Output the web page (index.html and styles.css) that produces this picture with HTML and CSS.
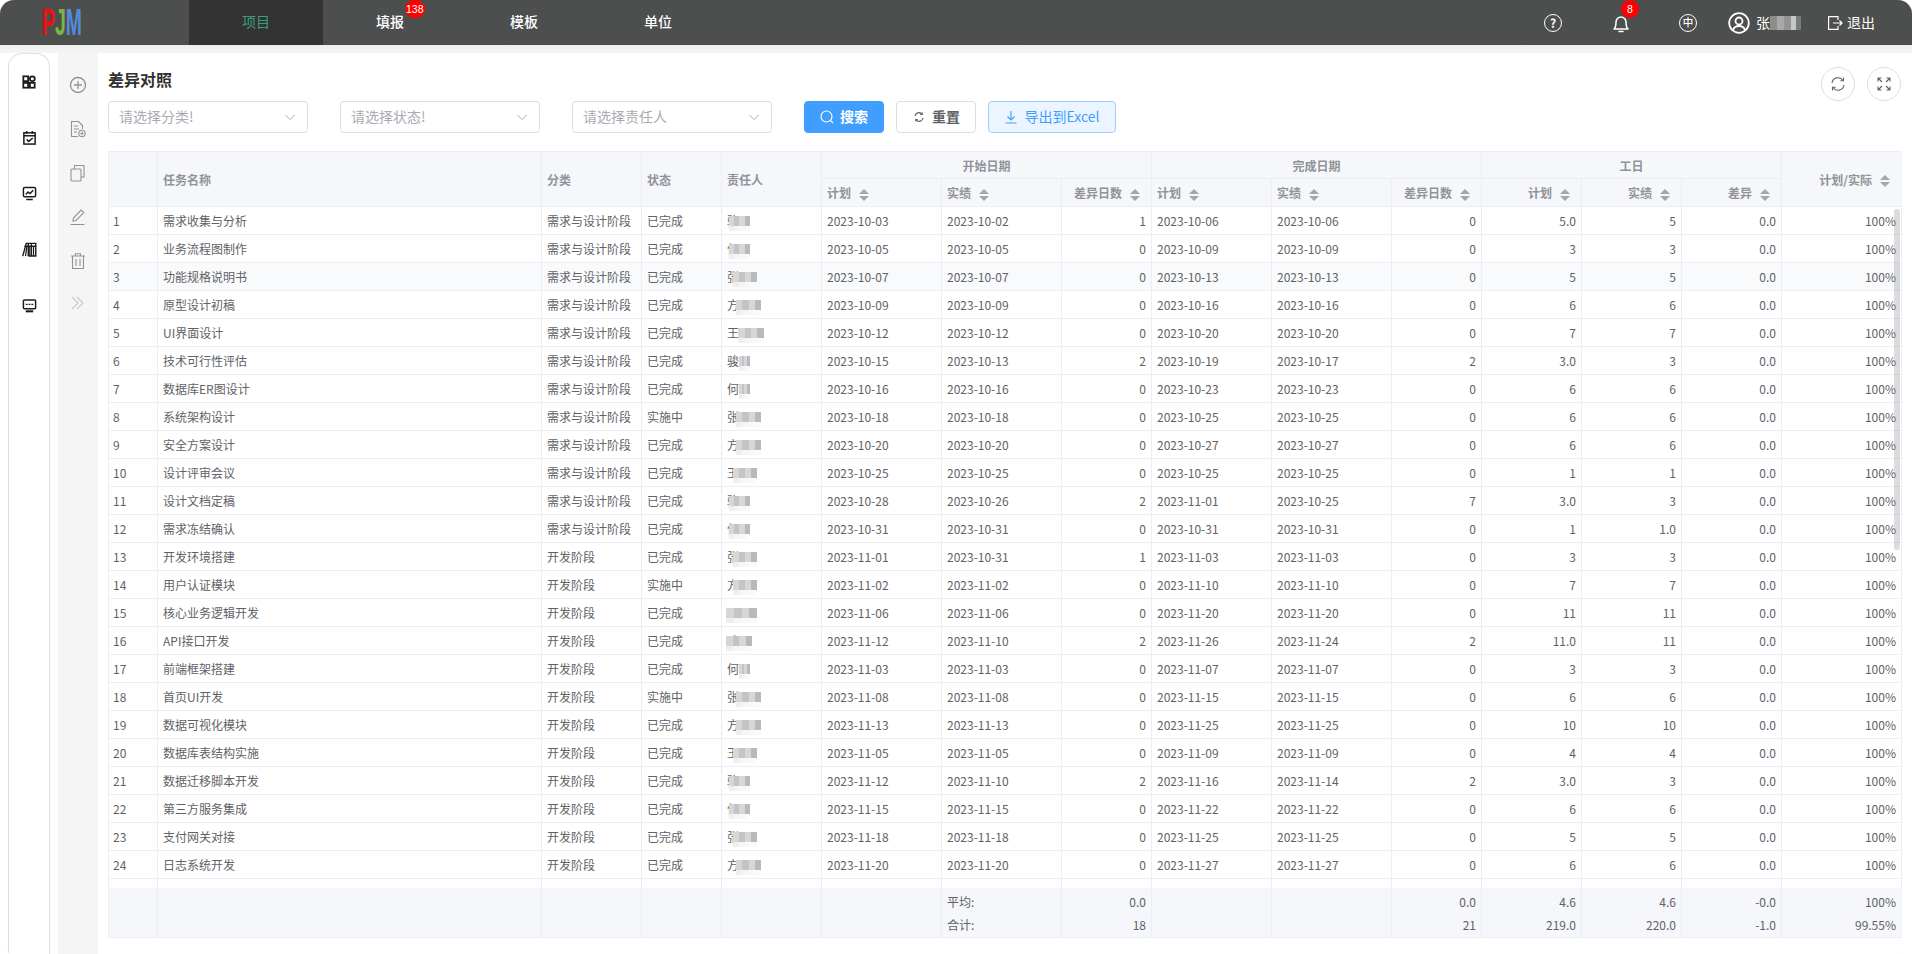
FILE: index.html
```html
<!DOCTYPE html>
<html lang="zh-CN">
<head>
<meta charset="utf-8">
<title>差异对照</title>
<link rel="stylesheet" href="styles.css">
</head>
<body>
<div class="app">
  <header class="hd">
    <div class="logo"><span class="logo-t"><span class="lp">P</span><span class="lj">J</span><span class="lm">M</span></span></div>
    <nav class="nav">
      <a class="tab active">项目</a>
      <a class="tab">填报<span class="badge b-tab">138</span></a>
      <a class="tab">模板</a>
      <a class="tab">单位</a>
    </nav>
    <div class="hd-right">
      <span class="hd-ico"><span class="ring">?</span></span>
      <span class="hd-ico">
        <svg class="bell" viewBox="0 0 18 20" width="18" height="20" fill="none" stroke="#fff" stroke-width="1.5"><path d="M2 16c1.3-1.2 2-2.4 2-7a5 5 0 0 1 10 0c0 4.600.7 5.800 2 7z" stroke-linejoin="round"/><path d="M7 18.500h4" stroke-linecap="round"/></svg>
        <span class="badge b-bell">8</span>
      </span>
      <span class="hd-ico hd-lang"><span class="ring ring-zh">中</span></span>
      <span class="user">
        <svg viewBox="0 0 22 22" width="22" height="22" fill="none" stroke="#fff" stroke-width="1.800"><circle cx="11" cy="11" r="9.800"/><circle cx="11" cy="9" r="3.500"/><path d="M5 18c1-3 3.500-4 6-4s5 1 6 4"/></svg>
        <span class="user-n">张<i class="mz-top"></i></span>
      </span>
      <span class="exit">
        <svg viewBox="0 0 16 16" width="16" height="16" fill="none" stroke="#fff" stroke-width="1.200"><path d="M11 5V1.600H1.600v12.800H11V11"/><path d="M6 8h9M12.500 5.500 15 8l-2.500 2.500"/></svg>
        <span class="lbl">退出</span>
      </span>
    </div>
  </header>

  <div class="body">
    <aside class="rail">
      <svg viewBox="0 0 16 16" width="14" height="14" fill="none" stroke="#1c1c1c" stroke-width="2"><rect x="1.500" y="1.500" width="5.500" height="5.500"/><rect x="1.500" y="9" width="5.500" height="5.500"/><rect x="9" y="9" width="5.500" height="5.500"/><circle cx="11.800" cy="4.300" r="2.800"/></svg>
      <svg viewBox="0 0 16 16" width="15" height="15" fill="none" stroke="#1c1c1c" stroke-width="1.600"><rect x="2" y="3" width="12" height="12"/><path d="M2 6.200h12M5 1v3M11 1v3"/><path d="m5 10 2.200 2.200L11.500 8.500"/></svg>
      <svg viewBox="0 0 16 16" width="15" height="15" fill="none" stroke="#1c1c1c" stroke-width="1.600"><rect x="1.500" y="1.500" width="13" height="10" rx="1.500"/><path d="m4 9 2.500-2.500 2 1.500L12 4.500M4.500 14.500h7"/></svg>
      <svg viewBox="0 0 16 16" width="15" height="15" fill="none" stroke="#1c1c1c" stroke-width="1.500"><path d="M.8 15 4.500 1.500h2.200V15M6.700 1.500H10V15H6.700M10 1.500h4.700V15H10M2.500 4.500h12"/><path d="M3.800 15 5.200 4.500M8.300 4.500V15M12.300 4.500V15" stroke-width="1.300"/></svg>
      <svg viewBox="0 0 16 16" width="15" height="15" fill="none" stroke="#1c1c1c" stroke-width="1.600"><rect x="1.500" y="2" width="13" height="9.500" rx="1"/><path d="M4 14.200h8" stroke-width="2.200"/><path d="M4 6.800h2M7 6.800h2M10 6.800h2" stroke-width="1.400"/></svg>
    </aside>
    <aside class="tools">
      <svg viewBox="0 0 18 18" width="18" height="18" fill="none" stroke="#909399" stroke-width="1.300"><circle cx="9" cy="9" r="7.500"/><path d="M9 5v8M5 9h8"/></svg>
      <svg viewBox="0 0 18 18" width="18" height="18" fill="none" stroke="#909399" stroke-width="1.100"><path d="M9 16.500H2.500V1.500h7l4 4V9"/><path d="M5 6h4M5 9h5M5 12h3"/><circle cx="13" cy="13.500" r="3.200"/><path d="M13 11.800v3.400M11.300 13.500h3.400"/></svg>
      <svg viewBox="0 0 18 18" width="18" height="18" fill="none" stroke="#909399" stroke-width="1.100"><rect x="2" y="5" width="10" height="12" rx="1"/><path d="M5.500 5V1.500h9.500v11.500L12 13"/></svg>
      <svg viewBox="0 0 18 18" width="18" height="18" fill="none" stroke="#909399" stroke-width="1.100"><path d="m4 13 .5-3L12 2l2.800 2.600L7 12.500z"/><path d="M1.500 16.500h14"/></svg>
      <svg viewBox="0 0 18 18" width="18" height="18" fill="none" stroke="#909399" stroke-width="1.100"><path d="M2 4h14M6.500 4V1.800h5V4M3.500 4v12.500h11V4M7 7v7M11 7v7"/></svg>
      <svg class="t-last" viewBox="0 0 18 18" width="18" height="18" fill="none" stroke="#c8c9cc" stroke-width="1.100"><path d="m3 3 6 6-6 6M8 3l6 6-6 6"/></svg>
    </aside>

    <main class="main">
      <div class="top">
        <h1 class="title">差异对照</h1>
        <div class="top-btns">
          <span class="circle"><svg viewBox="0 0 16 16" width="16" height="16" fill="none" stroke="#606266" stroke-width="1.100"><path d="M2 7a6 6 0 0 1 11-2.500M14 9a6 6 0 0 1-11 2.500"/><path d="M13.500 1.500v3.200h-3.200M2.500 14.500v-3.200h3.200"/></svg></span>
          <span class="circle"><svg viewBox="0 0 16 16" width="16" height="16" fill="none" stroke="#606266" stroke-width="1.100"><path d="M2 5.500V2h3.500M14 5.500V2h-3.500M2 10.500V14h3.500M14 10.500V14h-3.500M2 2l4 4M14 2l-4 4M2 14l4-4M14 14l-4-4"/></svg></span>
        </div>
      </div>
      <div class="filters">
        <div class="sel"><span class="lbl">请选择分类!</span><svg viewBox="0 0 12 12" width="12" height="12" fill="none" stroke="#a8abb2" stroke-width="1"><path d="m1.500 4 4.500 4.500L10.500 4"/></svg></div>
        <div class="sel"><span class="lbl">请选择状态!</span><svg viewBox="0 0 12 12" width="12" height="12" fill="none" stroke="#a8abb2" stroke-width="1"><path d="m1.500 4 4.500 4.500L10.500 4"/></svg></div>
        <div class="sel"><span class="lbl">请选择责任人</span><svg viewBox="0 0 12 12" width="12" height="12" fill="none" stroke="#a8abb2" stroke-width="1"><path d="m1.500 4 4.500 4.500L10.500 4"/></svg></div>
        <button class="btn btn-p"><svg viewBox="0 0 14 14" width="14" height="14" fill="none" stroke="#fff" stroke-width="1.100"><circle cx="6.500" cy="6.500" r="5.500"/><path d="m10.500 10.500 2.500 2.500"/></svg><span class="lbl">搜索</span></button>
        <button class="btn btn-d"><svg viewBox="0 0 14 14" width="14" height="14" fill="none" stroke="#606266" stroke-width="1.200"><path d="M3 6a4 4 0 0 1 6.800-2.200M11 8a4 4 0 0 1-6.800 2.200"/><path d="M10.200 2.400v2H8.200M3.800 11.600v-2h2"/></svg><span class="lbl">重置</span></button>
        <button class="btn btn-e"><svg viewBox="0 0 14 14" width="14" height="14" fill="none" stroke="#409eff" stroke-width="1.100"><path d="M7 1v8.500M3.500 6.500 7 10l3.500-3.500M1.500 13h11"/></svg><span class="lbl">导出到Excel</span></button>
      </div>

      <div class="grid">
        <table class="t t-h">
          <colgroup><col class="c1"><col class="c2"><col class="c3"><col class="c4"><col class="c5"><col class="c6"><col class="c6"><col class="c7"><col class="c6"><col class="c6"><col class="c7"><col class="c5"><col class="c5"><col class="c5"><col class="c6"></colgroup>
          <thead>
            <tr class="h1">
              <th rowspan="2"></th><th rowspan="2">任务名称</th><th rowspan="2">分类</th><th rowspan="2">状态</th><th rowspan="2">责任人</th>
              <th colspan="3" class="ctr">开始日期</th><th colspan="3" class="ctr">完成日期</th><th colspan="3" class="ctr">工日</th>
              <th rowspan="2" class="r">计划/实际<i class="sort"></i></th>
            </tr>
            <tr class="h2">
              <th>计划<i class="sort"></i></th><th>实绩<i class="sort"></i></th><th class="r">差异日数<i class="sort"></i></th>
              <th>计划<i class="sort"></i></th><th>实绩<i class="sort"></i></th><th class="r">差异日数<i class="sort"></i></th>
              <th class="r">计划<i class="sort"></i></th><th class="r">实绩<i class="sort"></i></th><th class="r">差异<i class="sort"></i></th>
            </tr>
          </thead>
        </table>
        <div class="scroll">
          <table class="t t-b">
            <colgroup><col class="c1"><col class="c2"><col class="c3"><col class="c4"><col class="c5"><col class="c6"><col class="c6"><col class="c7"><col class="c6"><col class="c6"><col class="c7"><col class="c5"><col class="c5"><col class="c5"><col class="c6"></colgroup>
            <tbody>
              <tr><td>1</td><td>需求收集与分析</td><td>需求与设计阶段</td><td>已完成</td><td><span class="nm">骆<i class="mz mz-a"></i></span></td><td>2023-10-03</td><td>2023-10-02</td><td>1</td><td>2023-10-06</td><td>2023-10-06</td><td>0</td><td>5.0</td><td>5</td><td>0.0</td><td>100%</td></tr>
              <tr><td>2</td><td>业务流程图制作</td><td>需求与设计阶段</td><td>已完成</td><td><span class="nm">何<i class="mz mz-a"></i></span></td><td>2023-10-05</td><td>2023-10-05</td><td>0</td><td>2023-10-09</td><td>2023-10-09</td><td>0</td><td>3</td><td>3</td><td>0.0</td><td>100%</td></tr>
              <tr class="hov"><td>3</td><td>功能规格说明书</td><td>需求与设计阶段</td><td>已完成</td><td><span class="nm">张<i class="mz mz-b"></i></span></td><td>2023-10-07</td><td>2023-10-07</td><td>0</td><td>2023-10-13</td><td>2023-10-13</td><td>0</td><td>5</td><td>5</td><td>0.0</td><td>100%</td></tr>
              <tr><td>4</td><td>原型设计初稿</td><td>需求与设计阶段</td><td>已完成</td><td><span class="nm">方<i class="mz mz-c"></i></span></td><td>2023-10-09</td><td>2023-10-09</td><td>0</td><td>2023-10-16</td><td>2023-10-16</td><td>0</td><td>6</td><td>6</td><td>0.0</td><td>100%</td></tr>
              <tr><td>5</td><td>UI界面设计</td><td>需求与设计阶段</td><td>已完成</td><td><span class="nm">王<i class="mz mz-d"></i></span></td><td>2023-10-12</td><td>2023-10-12</td><td>0</td><td>2023-10-20</td><td>2023-10-20</td><td>0</td><td>7</td><td>7</td><td>0.0</td><td>100%</td></tr>
              <tr><td>6</td><td>技术可行性评估</td><td>需求与设计阶段</td><td>已完成</td><td><span class="nm">骏<i class="mz mz-e"></i></span></td><td>2023-10-15</td><td>2023-10-13</td><td>2</td><td>2023-10-19</td><td>2023-10-17</td><td>2</td><td>3.0</td><td>3</td><td>0.0</td><td>100%</td></tr>
              <tr><td>7</td><td>数据库ER图设计</td><td>需求与设计阶段</td><td>已完成</td><td><span class="nm">何<i class="mz mz-e"></i></span></td><td>2023-10-16</td><td>2023-10-16</td><td>0</td><td>2023-10-23</td><td>2023-10-23</td><td>0</td><td>6</td><td>6</td><td>0.0</td><td>100%</td></tr>
              <tr><td>8</td><td>系统架构设计</td><td>需求与设计阶段</td><td>实施中</td><td><span class="nm">张<i class="mz mz-c"></i></span></td><td>2023-10-18</td><td>2023-10-18</td><td>0</td><td>2023-10-25</td><td>2023-10-25</td><td>0</td><td>6</td><td>6</td><td>0.0</td><td>100%</td></tr>
              <tr><td>9</td><td>安全方案设计</td><td>需求与设计阶段</td><td>已完成</td><td><span class="nm">方<i class="mz mz-c"></i></span></td><td>2023-10-20</td><td>2023-10-20</td><td>0</td><td>2023-10-27</td><td>2023-10-27</td><td>0</td><td>6</td><td>6</td><td>0.0</td><td>100%</td></tr>
              <tr><td>10</td><td>设计评审会议</td><td>需求与设计阶段</td><td>已完成</td><td><span class="nm">王<i class="mz mz-b"></i></span></td><td>2023-10-25</td><td>2023-10-25</td><td>0</td><td>2023-10-25</td><td>2023-10-25</td><td>0</td><td>1</td><td>1</td><td>0.0</td><td>100%</td></tr>
              <tr><td>11</td><td>设计文档定稿</td><td>需求与设计阶段</td><td>已完成</td><td><span class="nm">骆<i class="mz mz-a"></i></span></td><td>2023-10-28</td><td>2023-10-26</td><td>2</td><td>2023-11-01</td><td>2023-10-25</td><td>7</td><td>3.0</td><td>3</td><td>0.0</td><td>100%</td></tr>
              <tr><td>12</td><td>需求冻结确认</td><td>需求与设计阶段</td><td>已完成</td><td><span class="nm">何<i class="mz mz-a"></i></span></td><td>2023-10-31</td><td>2023-10-31</td><td>0</td><td>2023-10-31</td><td>2023-10-31</td><td>0</td><td>1</td><td>1.0</td><td>0.0</td><td>100%</td></tr>
              <tr><td>13</td><td>开发环境搭建</td><td>开发阶段</td><td>已完成</td><td><span class="nm">张<i class="mz mz-b"></i></span></td><td>2023-11-01</td><td>2023-10-31</td><td>1</td><td>2023-11-03</td><td>2023-11-03</td><td>0</td><td>3</td><td>3</td><td>0.0</td><td>100%</td></tr>
              <tr><td>14</td><td>用户认证模块</td><td>开发阶段</td><td>实施中</td><td><span class="nm">方<i class="mz mz-b"></i></span></td><td>2023-11-02</td><td>2023-11-02</td><td>0</td><td>2023-11-10</td><td>2023-11-10</td><td>0</td><td>7</td><td>7</td><td>0.0</td><td>100%</td></tr>
              <tr><td>15</td><td>核心业务逻辑开发</td><td>开发阶段</td><td>已完成</td><td><span class="nm">王<i class="mz mz-f"></i></span></td><td>2023-11-06</td><td>2023-11-06</td><td>0</td><td>2023-11-20</td><td>2023-11-20</td><td>0</td><td>11</td><td>11</td><td>0.0</td><td>100%</td></tr>
              <tr><td>16</td><td>API接口开发</td><td>开发阶段</td><td>已完成</td><td><span class="nm">骏<i class="mz mz-g"></i></span></td><td>2023-11-12</td><td>2023-11-10</td><td>2</td><td>2023-11-26</td><td>2023-11-24</td><td>2</td><td>11.0</td><td>11</td><td>0.0</td><td>100%</td></tr>
              <tr><td>17</td><td>前端框架搭建</td><td>开发阶段</td><td>已完成</td><td><span class="nm">何<i class="mz mz-e"></i></span></td><td>2023-11-03</td><td>2023-11-03</td><td>0</td><td>2023-11-07</td><td>2023-11-07</td><td>0</td><td>3</td><td>3</td><td>0.0</td><td>100%</td></tr>
              <tr><td>18</td><td>首页UI开发</td><td>开发阶段</td><td>实施中</td><td><span class="nm">张<i class="mz mz-c"></i></span></td><td>2023-11-08</td><td>2023-11-08</td><td>0</td><td>2023-11-15</td><td>2023-11-15</td><td>0</td><td>6</td><td>6</td><td>0.0</td><td>100%</td></tr>
              <tr><td>19</td><td>数据可视化模块</td><td>开发阶段</td><td>已完成</td><td><span class="nm">方<i class="mz mz-c"></i></span></td><td>2023-11-13</td><td>2023-11-13</td><td>0</td><td>2023-11-25</td><td>2023-11-25</td><td>0</td><td>10</td><td>10</td><td>0.0</td><td>100%</td></tr>
              <tr><td>20</td><td>数据库表结构实施</td><td>开发阶段</td><td>已完成</td><td><span class="nm">王<i class="mz mz-b"></i></span></td><td>2023-11-05</td><td>2023-11-05</td><td>0</td><td>2023-11-09</td><td>2023-11-09</td><td>0</td><td>4</td><td>4</td><td>0.0</td><td>100%</td></tr>
              <tr><td>21</td><td>数据迁移脚本开发</td><td>开发阶段</td><td>已完成</td><td><span class="nm">骆<i class="mz mz-a"></i></span></td><td>2023-11-12</td><td>2023-11-10</td><td>2</td><td>2023-11-16</td><td>2023-11-14</td><td>2</td><td>3.0</td><td>3</td><td>0.0</td><td>100%</td></tr>
              <tr><td>22</td><td>第三方服务集成</td><td>开发阶段</td><td>已完成</td><td><span class="nm">何<i class="mz mz-a"></i></span></td><td>2023-11-15</td><td>2023-11-15</td><td>0</td><td>2023-11-22</td><td>2023-11-22</td><td>0</td><td>6</td><td>6</td><td>0.0</td><td>100%</td></tr>
              <tr><td>23</td><td>支付网关对接</td><td>开发阶段</td><td>已完成</td><td><span class="nm">张<i class="mz mz-b"></i></span></td><td>2023-11-18</td><td>2023-11-18</td><td>0</td><td>2023-11-25</td><td>2023-11-25</td><td>0</td><td>5</td><td>5</td><td>0.0</td><td>100%</td></tr>
              <tr><td>24</td><td>日志系统开发</td><td>开发阶段</td><td>已完成</td><td><span class="nm">方<i class="mz mz-c"></i></span></td><td>2023-11-20</td><td>2023-11-20</td><td>0</td><td>2023-11-27</td><td>2023-11-27</td><td>0</td><td>6</td><td>6</td><td>0.0</td><td>100%</td></tr>
              <tr><td></td><td></td><td></td><td></td><td></td><td></td><td></td><td></td><td></td><td></td><td></td><td></td><td></td><td></td><td></td></tr>
            </tbody>
          </table>
          <span class="thumb"></span>
        </div>
        <table class="t t-f">
          <colgroup><col class="c1"><col class="c2"><col class="c3"><col class="c4"><col class="c5"><col class="c6"><col class="c6"><col class="c7"><col class="c6"><col class="c6"><col class="c7"><col class="c5"><col class="c5"><col class="c5"><col class="c6"></colgroup>
          <tfoot>
            <tr>
              <td></td><td></td><td></td><td></td><td></td><td></td>
              <td><div>平均:</div><div>合计:</div></td>
              <td><div>0.0</div><div>18</div></td>
              <td></td><td></td>
              <td><div>0.0</div><div>21</div></td>
              <td><div>4.6</div><div>219.0</div></td>
              <td><div>4.6</div><div>220.0</div></td>
              <td><div>-0.0</div><div>-1.0</div></td>
              <td><div>100%</div><div>99.55%</div></td>
            </tr>
          </tfoot>
        </table>
      </div>
    </main>
  </div>
</div>
</body>
</html>
```

FILE: styles.css
```css
* { box-sizing: border-box; }
html, body { margin: 0; height: 100%; background: #fff; }
body { font-family: "Noto Sans CJK SC", "Noto Sans", sans-serif; font-size: 12px; color: #606266; overflow: hidden; }

.app { height: 954px; display: flex; flex-direction: column; border-radius: 14px; overflow: hidden; box-shadow: inset 0 -1px 2px rgba(0,0,0,.08); }
.lbl { position: relative; top: -1px; }

/* header */
.hd { height: 45px; flex: none; display: flex; align-items: stretch; background: #4d4e4e; color: #fff; font-size: 14px; }
.logo { width: 189px; flex: none; padding-left: 42px; display: flex; align-items: center; overflow: hidden; }
.logo-t { display: inline-block; font-family: "Liberation Sans", sans-serif; font-size: 36px; line-height: 36px; font-weight: 700; transform: scaleX(.54); transform-origin: left center; white-space: nowrap; }
.lp { color: #f40d0d; }
.lj { color: #7db544; }
.lm { color: #4f8ddb; }
.nav { display: flex; }
.tab { position: relative; width: 134px; display: flex; align-items: center; justify-content: center; font-weight: 500; padding-bottom: 4px; }
.tab.active { background: #333; color: #3e9c80; font-weight: 400; }
.badge { position: absolute; background: #f00; color: #fff; font-size: 10.500px; line-height: 18px; height: 18px; min-width: 18px; text-align: center; border-radius: 9px; font-family: "Liberation Sans", sans-serif; font-weight: 400; }
.b-tab { left: 82px; top: 0; padding: 0 1px; }
.b-bell { left: 34px; top: 0; }
.hd-right { margin-left: auto; display: flex; align-items: center; padding-right: 37px; }
.hd-ico { position: relative; width: 68px; height: 45px; display: flex; align-items: center; justify-content: center; }
.hd-lang { width: 66px; margin-right: 7px; }
.ring { width: 18px; height: 18px; border: 1.500px solid #fff; border-radius: 50%; display: flex; align-items: center; justify-content: center; font-size: 12px; line-height: 1; font-weight: 700; }
.ring-zh { font-size: 10.500px; font-weight: 500; }
.user { display: flex; align-items: center; gap: 6px; margin-right: 26px; }
.user-n { position: relative; width: 45px; height: 20px; line-height: 18px; }
.mz-top { position: absolute; left: 14px; top: 3px; width: 31px; height: 14px; background: linear-gradient(90deg, #8c8c8c 0 22%, #a8a8a8 22% 45%, #939393 45% 68%, #c2c8cc 68% 85%, #7a7a7a 85%); }
.exit { display: flex; align-items: center; gap: 4px; }

/* layout */
.body { flex: 1; min-height: 0; display: flex; padding-top: 8px; background: linear-gradient(#eeeeee, #f5f5f5 8px, #fff 8px); }
.rail { width: 42px; margin-left: 8px; flex: none; display: flex; flex-direction: column; align-items: center; gap: 41px; padding-top: 21px; border: 1px solid #dcdfe6; border-bottom: 0; border-radius: 14px 14px 0 0; background: #fff; }
.tools { width: 40px; margin-left: 8px; flex: none; background: #f5f5f5; display: flex; flex-direction: column; align-items: center; gap: 26px; padding-top: 23px; }
.t-last { margin-top: -2px; }
.main { flex: 1; min-width: 0; padding: 14px 10px 0; background: #fff; }

.top { height: 34px; display: flex; justify-content: space-between; }
.title { margin: 0; font-size: 16px; line-height: 24px; font-weight: 700; color: #303133; }
.top-btns { display: flex; gap: 12px; margin-right: 1px; }
.circle { width: 34px; height: 34px; border: 1px solid #dcdfe6; border-radius: 50%; display: flex; align-items: center; justify-content: center; }

.filters { display: flex; align-items: center; height: 32px; margin-bottom: 18px; }
.sel { width: 200px; height: 32px; margin-right: 32px; padding: 0 11px 0 10px; border: 1px solid #dcdfe6; border-radius: 4px; display: flex; align-items: center; justify-content: space-between; color: #a8abb2; font-size: 14px; }
.btn { height: 32px; display: flex; align-items: center; justify-content: center; gap: 6px; border: 1px solid #dcdfe6; border-radius: 4px; background: #fff; font-family: inherit; font-size: 14px; padding: 0; margin: 0 12px 0 0; color: #606266; }
.btn-p { width: 80px; background: #409eff; border-color: #409eff; color: #fff; font-weight: 700; }
.btn-d { width: 80px; font-weight: 700; }
.btn-e { width: 128px; background: #ecf5ff; border-color: #a0cfff; color: #409eff; margin-right: 0; }

/* table */
.grid { width: 1794px; border-left: 1px solid #ebeef5; border-top: 1px solid #ebeef5; }
.t { width: 1793px; table-layout: fixed; border-collapse: separate; border-spacing: 0; }
.c1 { width: 49px; } .c2 { width: 384px; } .c3 { width: 100px; } .c4 { width: 80px; } .c5 { width: 100px; } .c6 { width: 120px; } .c7 { width: 90px; }
.t th, .t td { border-right: 1px solid #ebeef5; border-bottom: 1px solid #ebeef5; padding: 0 5px; font-size: 12px; white-space: nowrap; overflow: visible; }
.t-b td:first-child { padding-left: 4px; }
.t th { background: #f5f7fa; color: #909399; font-weight: 700; text-align: left; }
.t th.ctr { text-align: center; }
.t th.r { text-align: right; }
.h1 th { height: 27px; }
.h2 th { height: 28px; }
.sort { display: inline-flex; flex-direction: column; gap: 2px; width: 10px; margin: 0 6px 0 8px; vertical-align: middle; }
.sort::before { content: ""; border-left: 5px solid transparent; border-right: 5px solid transparent; border-bottom: 5.500px solid #a3a6ad; }
.sort::after { content: ""; border-left: 5px solid transparent; border-right: 5px solid transparent; border-top: 5.500px solid #a3a6ad; }

.scroll { position: relative; height: 681px; overflow: hidden; }
.t-b td { height: 28px; line-height: 27px; }
.t-b td:nth-child(8), .t-b td:nth-child(n+11) { text-align: right; }
.t-b .hov td { background: #f9fafc; }
.thumb { position: absolute; right: 2px; top: 2px; width: 6px; height: 341px; border-radius: 3px; background: rgba(144,147,153,.32); }

.nm { position: relative; display: inline-block; }
.mz { position: absolute; top: 9px; height: 15px; background:
  linear-gradient(90deg, #d6d6d6 0 25%, #c4c4c8 25% 50%, #d9d6d6 50% 75%, #b6b9be 75%) 0 0 / 100% 10px no-repeat,
  linear-gradient(90deg, #efefef 0 25%, #f4f5f5 25% 50%, #f8f8f8 50% 75%, #fafafa 75%) 0 10px / 100% 5px no-repeat; }
.mz-a { left: 2px; width: 21px; }
.mz-b { left: 6px; width: 24px; }
.mz-c { left: 9px; width: 25px; }
.mz-d { left: 11px; width: 26px; }
.mz-e { left: 12px; width: 11px; }
.mz-f { left: -1px; width: 31px; }
.mz-g { left: -1px; width: 26px; }

.t-f td { height: 50px; background: #f5f7fa; vertical-align: middle; padding-top: 1px; text-align: right; }
.t-f td:nth-child(7) { text-align: left; }
.t-f div { height: 23px; line-height: 23px; }
```
